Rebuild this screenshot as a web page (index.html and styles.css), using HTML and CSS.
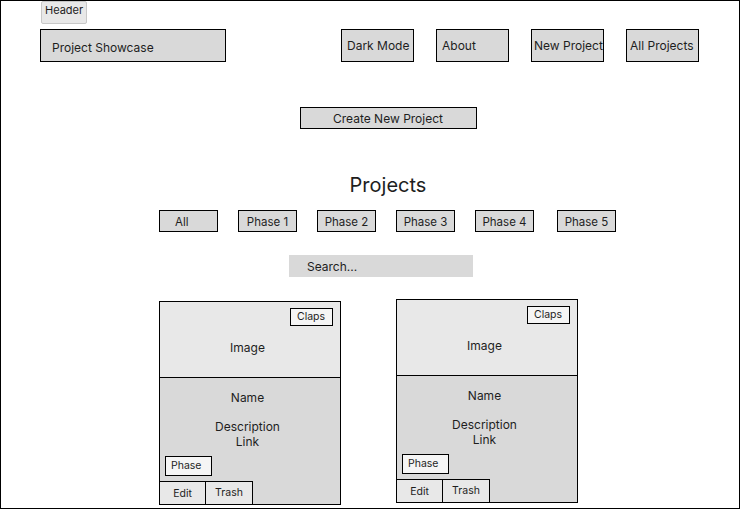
FILE: index.html
```html
<!DOCTYPE html>
<html>
<head>
<meta charset="utf-8">
<link rel="stylesheet" href="styles.css">
</head>
<body>
<div class="frame">
  <div class="tag">Header</div>
  <div class="topbar">
    <div class="brand">Project Showcase</div>
    <nav class="nav">
      <div class="navbtn">Dark Mode</div>
      <div class="navbtn">About</div>
      <div class="navbtn navbtn-tight">New Project</div>
      <div class="navbtn navbtn-mid">All Projects</div>
    </nav>
  </div>
  <main class="main">
    <div class="create">Create New Project</div>
    <h1 class="title">Projects</h1>
    <div class="filters">
      <div class="filter filter-all">All</div>
      <div class="filter">Phase 1</div>
      <div class="filter">Phase 2</div>
      <div class="filter">Phase 3</div>
      <div class="filter">Phase 4</div>
      <div class="filter filter-last">Phase 5</div>
    </div>
    <div class="search">Search...</div>
    <div class="cards">
      <div class="card card-first">
        <div class="card-image">
          <div class="claps">Claps</div>
          <div class="image-label">Image</div>
        </div>
        <div class="card-body">
          <div class="line">Name</div>
          <div class="line desc">Description</div>
          <div class="line">Link</div>
          <div class="phase">Phase</div>
          <div class="actions">
            <div class="act act-edit">Edit</div>
            <div class="act act-trash">Trash</div>
          </div>
        </div>
      </div>
      <div class="card">
        <div class="card-image">
          <div class="claps">Claps</div>
          <div class="image-label">Image</div>
        </div>
        <div class="card-body">
          <div class="line">Name</div>
          <div class="line desc">Description</div>
          <div class="line">Link</div>
          <div class="phase">Phase</div>
          <div class="actions">
            <div class="act act-edit">Edit</div>
            <div class="act act-trash">Trash</div>
          </div>
        </div>
      </div>
    </div>
  </main>
</div>
</body>
</html>
```

FILE: styles.css
```css
* { box-sizing: border-box; }
html, body { margin: 0; padding: 0; background: #fff; }
body {
  font-family: Inter, "Noto Sans", sans-serif;
  color: #1e1e1e;
}
.frame {
  position: relative;
  width: 740px;
  height: 509px;
  border: 1px solid #000;
  display: flex;
  flex-direction: column;
  overflow: hidden;
}
.tag {
  position: absolute;
  top: 0;
  left: 40px;
  width: 46px;
  height: 23px;
  background: #e8e8e8;
  border: 1px solid #c8c8c8;
  border-radius: 2px;
  font-size: 11px;
  line-height: 16px;
  padding-left: 3px;
}
.topbar {
  margin-top: 28px;
  padding: 0 40px 0 39px;
  display: flex;
  justify-content: space-between;
}
.brand {
  width: 186px;
  height: 33px;
  background: #d9d9d9;
  border: 1px solid #000;
  font-size: 12px;
  display: flex;
  align-items: center;
  padding: 3px 0 0 11px;
}
.nav {
  display: flex;
  gap: 22px;
}
.navbtn {
  width: 73px;
  height: 33px;
  background: #d9d9d9;
  border: 1px solid #000;
  font-size: 12px;
  display: flex;
  align-items: center;
  padding-left: 5px;
  white-space: nowrap;
}
.navbtn-tight { padding-left: 2px; }
.navbtn-mid { padding-left: 3px; }
.main {
  margin-left: 158px;
  width: 458px;
  display: flex;
  flex-direction: column;
  align-items: center;
}
.create {
  margin-top: 45px;
  width: 177px;
  height: 22px;
  background: #d9d9d9;
  border: 1px solid #000;
  font-size: 12px;
  display: flex;
  align-items: center;
  justify-content: center;
  padding-top: 1px;
}
.title {
  margin: 44px 0 0;
  font-size: 20px;
  font-weight: 400;
  line-height: 24px;
  height: 24px;
}
.filters {
  align-self: stretch;
  margin-top: 13px;
  display: flex;
  gap: 20px;
}
.filter {
  width: 59px;
  height: 22px;
  background: #d9d9d9;
  border: 1px solid #000;
  font-size: 11.5px;
  display: flex;
  align-items: center;
  justify-content: center;
  padding-top: 1px;
}
.filter-all { justify-content: flex-start; padding-left: 15px; }
.filter-last { margin-left: 3px; }
.search {
  align-self: flex-start;
  margin: 23px 0 0 130px;
  width: 184px;
  height: 22px;
  background: #d9d9d9;
  font-size: 12px;
  display: flex;
  align-items: center;
  padding: 1px 0 0 18px;
}
.cards {
  align-self: flex-start;
  margin-top: 22px;
  display: flex;
  align-items: flex-start;
  gap: 55px;
}
.card {
  width: 182px;
  height: 204px;
  border: 1px solid #000;
  display: flex;
  flex-direction: column;
  background: #d9d9d9;
}
.card-first { margin-top: 2px; }
.card-image {
  height: 76px;
  flex: none;
  background: #e8e8e8;
  border-bottom: 1px solid #000;
  display: flex;
  flex-direction: column;
  align-items: center;
  padding-top: 6px;
}
.claps {
  align-self: flex-end;
  margin-right: 7px;
  width: 43px;
  height: 18px;
  background: #f5f5f5;
  border: 1px solid #000;
  font-size: 10.5px;
  line-height: 16px;
  padding-left: 6px;
}
.image-label {
  margin: 14px 5px 0 0;
  font-size: 12px;
  line-height: 15px;
}
.card-body {
  flex: 1;
  display: flex;
  flex-direction: column;
  align-items: center;
  padding: 12px 5px 0 0;
}
.line {
  font-size: 12px;
  line-height: 15px;
}
.desc { margin-top: 14px; }
.phase {
  align-self: flex-start;
  margin: 7px 0 0 5px;
  width: 47px;
  height: 20px;
  background: #f5f5f5;
  border: 1px solid #000;
  font-size: 10.5px;
  line-height: 18px;
  padding-left: 5px;
}
.actions {
  align-self: flex-start;
  margin-top: 5px;
  display: flex;
  flex: 1;
}
.act {
  width: 47px;
  background: #e8e8e8;
  border-top: 1px solid #000;
  border-right: 1px solid #000;
  font-size: 10.5px;
  display: flex;
  align-items: center;
  justify-content: center;
}
.act-edit { width: 46px; padding-top: 1px; }
.act-trash { padding-bottom: 1px; }
```
